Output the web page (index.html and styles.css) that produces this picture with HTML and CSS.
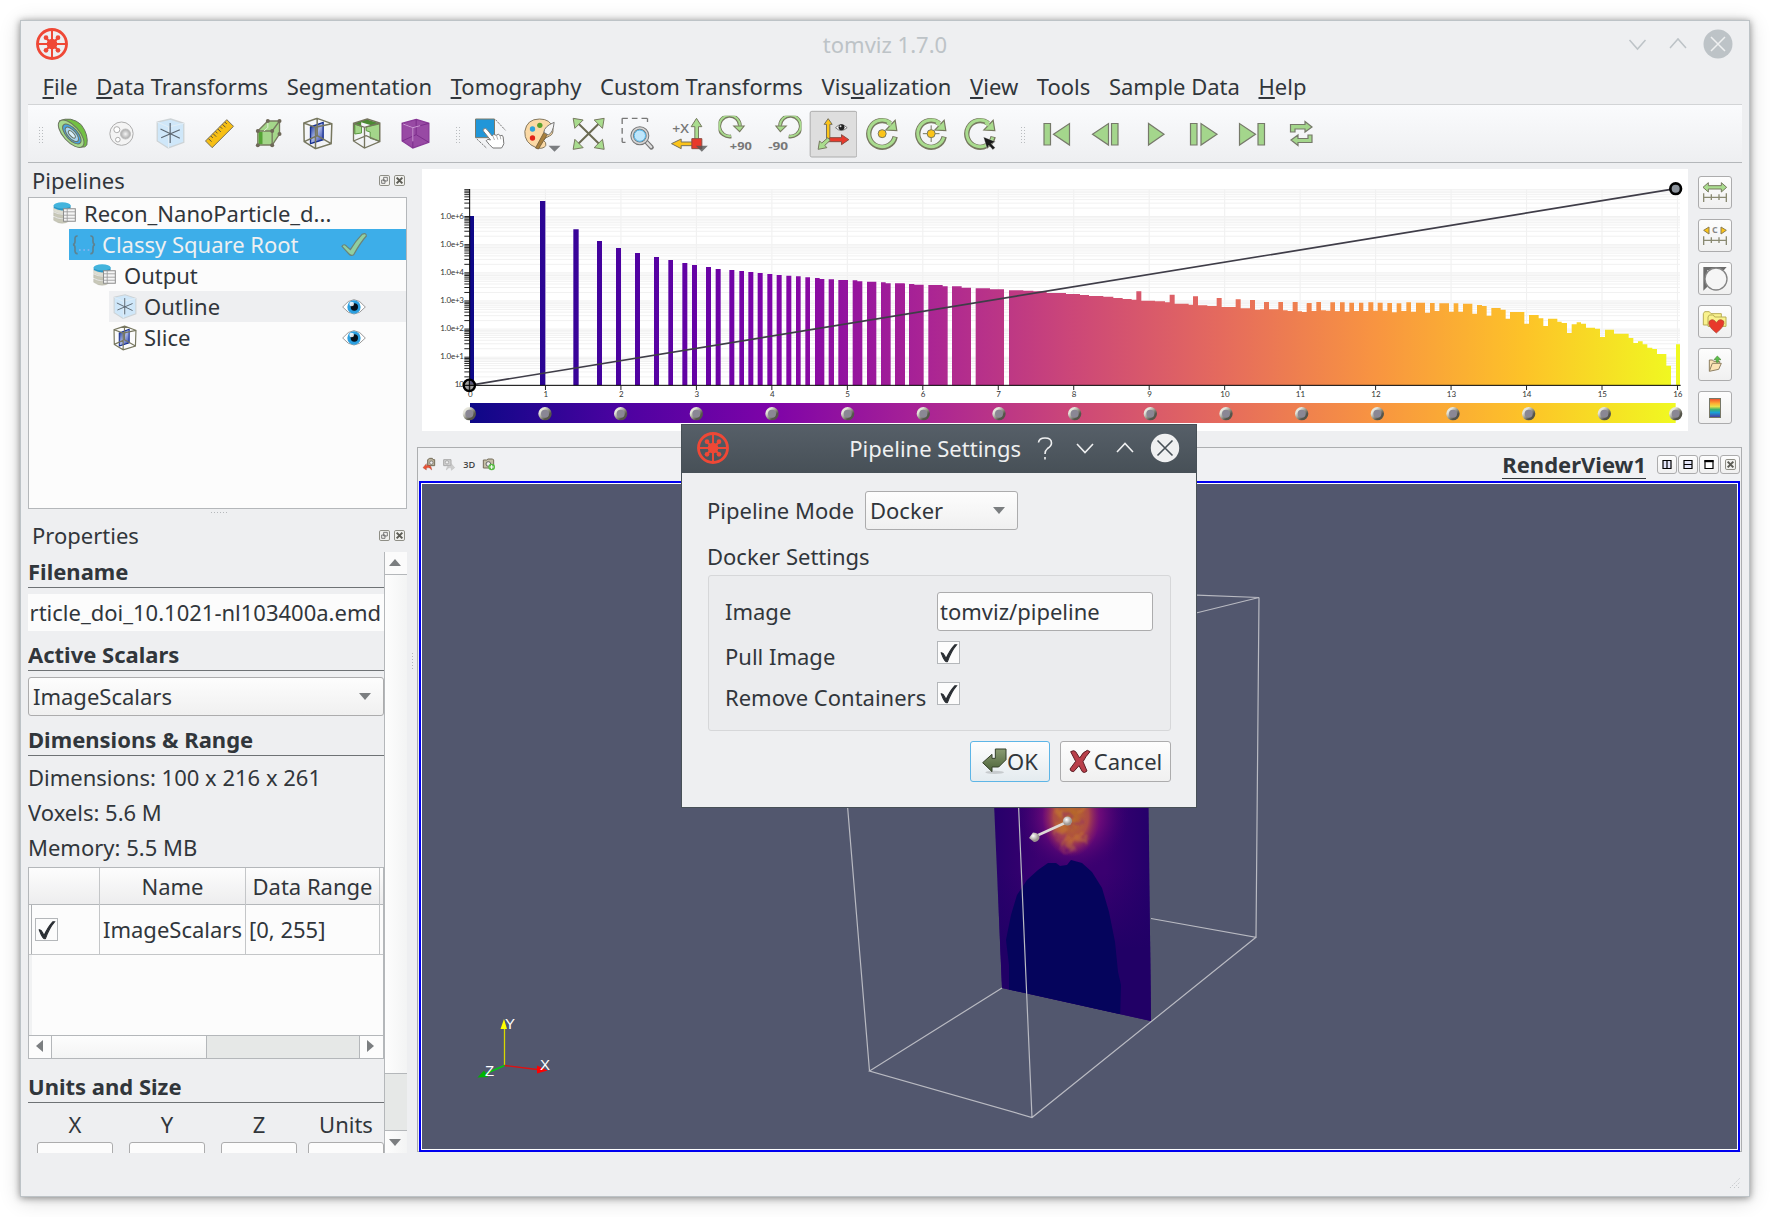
FILE: index.html
```html
<!DOCTYPE html>
<html lang="en">
<head>
<meta charset="utf-8">
<title>tomviz 1.7.0</title>
<link rel="stylesheet" href="styles.css">
</head>
<body>
<svg class="defs" width="0" height="0">
  <defs>
    <linearGradient id="blueFace" x1="0" y1="0" x2="1" y2="1"><stop offset="0" stop-color="#0c2a90"/><stop offset=".5" stop-color="#a9b6e6"/><stop offset="1" stop-color="#1b2f9c"/></linearGradient>
    <radialGradient id="bubble"><stop offset="0" stop-color="#f5f5f5"/><stop offset="1" stop-color="#a8a8a8"/></radialGradient>
    <symbol id="logo" viewBox="-48 -48 96 96">
      <g stroke="#ef4836" fill="none" stroke-linecap="round">
        <circle r="43.5" stroke-width="8.500"/>
        <path d="M0-43V43M-43 0H43" stroke-width="6"/>
        <path d="M-18-18L18 18M-18 18L18-18" stroke-width="7"/>
      </g>
      <g fill="#ef4836"><circle r="16"/><circle cx="-18" cy="-19" r="7"/><circle cx="18" cy="-19" r="7"/><circle cx="-18" cy="19" r="7"/><circle cx="18" cy="19" r="7"/></g>
    </symbol>
    <symbol id="outline" viewBox="470 355 86 92">
      <path d="M513 358L553 371V428L506 445L473 424V367Z" fill="#cfe7f9" stroke="#cdd3d6" stroke-width="4"/>
      <path d="M473 367L507 382L553 371M507 382V445" fill="none" stroke="#e3eef6" stroke-width="3"/>
      <path d="M512 370V430M483 388L541 416M485 414L541 390" stroke="#5c6670" stroke-width="3.500"/>
    </symbol>
    <symbol id="slice" viewBox="909 353 92 97">
      <path d="M933 382L971 368V420L933 432Z" fill="url(#blueFace)" stroke="#162f8f" stroke-width="4"/>
      <path d="M953 356L997 372L995 432L948 447L914 426L913 370ZM913 370L948 383L997 372M948 383V447M953 356V408L914 426M953 408L995 432" fill="none" stroke="#77775f" stroke-width="4.500"/>
    </symbol>
    <symbol id="db" viewBox="0 0 68 68">
      <path d="M2 44q25 14 50 0v10q-25 18-50 0ZM2 31q25 14 50 0v10q-25 14-50 0Z" fill="#c8c8b8" stroke="#a9a99c"/>
      <path d="M2 18q25 14 50 0v10q-25 14-50 0Z" fill="#deded2" stroke="#b4b4a8"/>
      <path d="M2 10v8q25 14 50 0v-8Z" fill="#2a96c4"/><ellipse cx="27" cy="10" rx="25" ry="9" fill="#43b4dd"/>
      <path d="M31 20H66V57H31Z" fill="#f5f5f5" stroke="#8d8d8d" stroke-width="3"/><path d="M31 29H66M31 39H66M31 48H66M42 20V57" stroke="#999" stroke-width="2.500"/>
    </symbol>
    <symbol id="eye" viewBox="0 0 72 48">
      <path d="M2 24Q36-20 70 24Q36 66 2 24Z" fill="#fff" stroke="#999" stroke-width="3"/>
      <circle cx="36" cy="24" r="20" fill="#2b9fe0"/><circle cx="37" cy="24" r="11" fill="#06121c"/><circle cx="29" cy="15" r="7" fill="#fff" opacity=".85"/>
    </symbol>
    <symbol id="tick" viewBox="0 0 66 66">
      <path d="M12 34C19 31 21 42 26 50C32 37 42 20 51 11H56C44 25 36 42 30 59C26 62 20 56 12 34Z" fill="#2a2e33" stroke="#2a2e33" stroke-width="3"/>
    </symbol>
    <symbol id="dock" viewBox="0 0 33 33">
      <rect x="1.500" y="1.500" width="30" height="30" rx="4" fill="#f1f1ee" stroke="#7a7a70" stroke-width="2.500"/>
      <path d="M14 7h11v11h-11zM8 15h10v10h-10z" fill="#f1f1ee" stroke="#666" stroke-width="2.500"/>
    </symbol>
    <symbol id="shut" viewBox="0 0 33 33">
      <rect x="1.500" y="1.500" width="30" height="30" rx="4" fill="#f1f1ee" stroke="#7a7a70" stroke-width="2.500"/>
      <path d="M8 8L25 25M25 8L8 25" stroke="#5c5c55" stroke-width="6"/>
    </symbol>
    <symbol id="spin" viewBox="-50 -50 100 100">
      <path d="M39 9A40 40 0 1 1 24-31" fill="none" stroke="#76795f" stroke-width="16"/>
      <path d="M38 11A40 40 0 1 1 26-31" fill="none" stroke="#a9dc8e" stroke-width="9"/>
      <path d="M39-40L44-9L11-11Z" fill="#a9dc8e" stroke="#76795f" stroke-width="3.500"/>
      <path d="M16-33L26-25" stroke="#a9dc8e" stroke-width="9"/>
    </symbol>
    <symbol id="halfspin" viewBox="0 0 100 100">
      <path d="M37 60A30 30 0 1 1 62 29" fill="none" stroke="#76795f" stroke-width="11"/>
      <path d="M36 59A30 30 0 1 1 62 31" fill="none" stroke="#a9dc8e" stroke-width="5.500"/>
      <path d="M44 30H74L61 46Z" fill="#a9dc8e" stroke="#76795f" stroke-width="3"/>
    </symbol>
  </defs>
</svg>

<div class="window">
  <header class="titlebar">
    <svg class="logo" width="32" height="32"><use href="#logo"/></svg>
    <span class="title">tomviz 1.7.0</span>
    <svg class="wm" width="110" height="32" viewBox="-10 0 110 32" fill="none">
      <path d="M-3.500 12L4.500 21L12.500 12M37 20L45 11L53 20" stroke="#bdc3c7" stroke-width="1.500"/>
      <circle cx="85" cy="16" r="14.500" fill="#bdc3c7"/><path d="M78 9L92 23M92 9L78 23" stroke="#eff0f1" stroke-width="1.500"/>
    </svg>
  </header>
  <nav class="menubar">
    <span><u>F</u>ile</span><span><u>D</u>ata Transforms</span><span>Segmentation</span><span><u>T</u>omography</span><span>Custom Transforms</span><span>Vis<u>u</u>alization</span><span><u>V</u>iew</span><span>Tools</span><span>Sample Data</span><span><u>H</u>elp</span>
  </nav>
  <div class="toolbar">
    <i class="grip"></i>
    <svg viewBox="145.500 313 147 174"><g stroke="#6a735f" stroke-width="3">
      <path d="M179 364Q215 348 245 375Q268 405 262 436Q258 444 246 442Q200 400 179 364Z" fill="#72c043"/>
      <ellipse cx="215" cy="402" rx="51" ry="24" transform="rotate(48 215 402)" fill="#a6d98c"/>
      <ellipse cx="217" cy="403" rx="37" ry="17" transform="rotate(48 217 403)" fill="#4aa3df"/>
      <ellipse cx="217" cy="404" rx="27" ry="12" transform="rotate(48 217 404)" fill="#a9d4f2"/>
      <ellipse cx="217" cy="404" rx="14" ry="6" transform="rotate(48 217 404)" fill="#d9effb"/></g></svg>
    <svg viewBox="292.500 313 147 174"><g stroke="#adadad" stroke-width="3">
      <circle cx="366" cy="402" r="35" fill="#f4f4f4"/><circle cx="352" cy="390" r="9" fill="#fff"/><circle cx="378" cy="403" r="15" fill="url(#bubble)" stroke="#c0c0c0"/><circle cx="355" cy="420" r="7" fill="#fff"/></g></svg>
    <svg viewBox="439.500 313 147 174"><use href="#outline" x="470" y="355" width="86" height="92"/></svg>
    <svg viewBox="586.500 313 147 174"><path d="M618 424L682 360L702 380L638 444Z" fill="#f7bf14" stroke="#77705a" stroke-width="3"/><path d="M627 417l9 9M634 409l6 6M641 402l9 9M648 395l6 6M655 388l9 9M662 381l6 6M669 374l9 9M676 367l6 6" stroke="#5b523b" stroke-width="3"/></svg>
    <svg viewBox="733.500 313 147 174"><path d="M775 394L805 364H840V403L818 436H775Z" fill="#a4d68a" stroke="#76795f" stroke-width="4"/><path d="M775 394H818V436M818 394L840 364" fill="none" stroke="#76795f" stroke-width="4"/><path d="M778 397h11v36h-11z" fill="#55a436"/><path d="M805 364v20l-12 10" fill="none" stroke="#dff0d5" stroke-width="3"/><g fill="#6e6858"><circle cx="775" cy="394" r="6"/><circle cx="805" cy="364" r="6"/><circle cx="840" cy="364" r="6"/><circle cx="840" cy="403" r="6"/><circle cx="818" cy="437" r="6"/><circle cx="775" cy="437" r="6"/><circle cx="818" cy="394" r="6"/></g></svg>
    <svg viewBox="880.500 313 147 174"><use href="#slice" x="909" y="353" width="92" height="97"/></svg>
    <svg viewBox="1027.500 313 147 174"><path d="M1063 371L1100 359L1140 371L1120 378L1085 368V400L1065 402Z" fill="#4c8a34"/><path d="M1066 374l20 6v20l-20 3zM1100 382L1140 373V424L1112 416V397L1100 393Z" fill="#a4d68a" stroke="#5d9a42" stroke-width="3"/><path d="M1103 358L1141 370V426L1095 445L1062 424V371ZM1062 371L1095 383L1141 370M1095 383V445M1062 424L1100 408L1141 426" fill="none" stroke="#76755f" stroke-width="4"/></svg>
    <svg viewBox="1174.500 313 147 174"><path d="M1250 359L1288 371V428L1240 445L1208 424V371Z" fill="#984aa4" stroke="#8a3a98" stroke-width="4"/><path d="M1208 371L1240 384L1288 371M1240 384V445M1250 359V405L1208 424M1250 405L1288 428" fill="none" stroke="#7b2d8b" stroke-width="3"/><path d="M1211 373L1240 384L1262 378M1240 384V425" fill="none" stroke="#cf9ad6" stroke-width="3"/></svg>
    <i class="grip mid"></i>
    <svg viewBox="76.500 43 147 174"><path d="M108 88H165V144H108Z" fill="#2196d8" stroke="#7b7b6b" stroke-width="3"/><path d="M168 90L198 122M112 148L142 176" stroke="#777" stroke-width="3" stroke-dasharray="7 3"/><path d="M131 119Q138 112 144 121L158 139Q162 130 170 137Q177 130 182 138Q190 134 191 142L193 162Q190 170 186 175H160Q148 164 140 153Q144 146 153 151L133 126Q130 122 131 119Z" fill="#fff" stroke="#777" stroke-width="3"/><path d="M160 139l5 12M171 138l4 12M182 139l2 10" stroke="#888" stroke-width="2"/></svg>
    <svg viewBox="223.500 43 147 174"><path d="M300 88Q262 88 256 125Q254 160 290 174Q310 180 319 168Q321 158 312 152Q318 143 330 139Q343 134 340 115Q333 88 300 88Z" fill="#fbd9a5" stroke="#84785f" stroke-width="3"/><circle cx="279" cy="118" r="8" fill="#2ea3dc"/><circle cx="301" cy="107" r="8" fill="#5aa02c"/><circle cx="279" cy="145" r="8" fill="#e32219"/><path d="M288 175L315 125L325 132L297 178Z" fill="#a87f3c" stroke="#705c3a" stroke-width="2.500"/><path d="M313 128Q314 110 344 98Q341 130 326 136Z" fill="#f5f5f5" stroke="#777" stroke-width="3"/><path d="M327 168h36l-18 18z" fill="#7b7d80"/></svg>
    <svg viewBox="370.500 43 147 174"><path d="M412 97L483 167M483 97L412 167" stroke="#6b6a52" stroke-width="6"/><g fill="#a9dc8e" stroke="#76795f" stroke-width="3"><path d="M401 86L431 91L406 116ZM494 86L464 91L489 116ZM401 179L431 174L406 149ZM494 179L464 174L489 149Z"/></g></svg>
    <svg viewBox="517.500 43 147 174"><path d="M548 86H624M548 86V158M624 86V97M548 158H558" fill="none" stroke="#777" stroke-width="4" stroke-dasharray="17 12"/><path d="M621 157L636 173" stroke="#777" stroke-width="14" stroke-linecap="round"/><path d="M622 158L635 172" stroke="#ddd" stroke-width="7" stroke-linecap="round"/><circle cx="601" cy="138" r="23" fill="#d4ecfa" stroke="#777" stroke-width="11"/><circle cx="601" cy="138" r="23" fill="none" stroke="#d6d6d6" stroke-width="5"/><circle cx="601" cy="138" r="17" fill="#bfe6fb" stroke="#4db3e6" stroke-width="3"/></svg>
    <svg viewBox="664.500 43 147 174"><text x="698" y="129" class="axlabel" textLength="50" lengthAdjust="spacingAndGlyphs">+X</text><path d="M766 150V111H755L771 86L787 111H777V150Z" fill="#a9dc8e" stroke="#76795f" stroke-width="3"/><path d="M760 157H725V148L696 162L725 177V168H760Z" fill="#fcc419" stroke="#76705a" stroke-width="3"/><path d="M757 147H787V177H757Z" fill="#e8392b" stroke="#8a4c42" stroke-width="3"/><path d="M769 168h36l-18 18z" fill="#555" opacity=".8"/></svg>
    <svg viewBox="811.500 43 147 174"><use href="#halfspin" x="837" y="78" width="104" height="104"/><text x="871" y="180" class="deg" textLength="66" lengthAdjust="spacingAndGlyphs">+90</text></svg>
    <svg viewBox="958.500 43 147 174"><g transform="translate(1922 0) scale(-1 1)"><use href="#halfspin" x="836" y="78" width="104" height="104"/></g><text x="986" y="180" class="deg" textLength="60" lengthAdjust="spacingAndGlyphs">-90</text></svg>
    <svg viewBox="1105.500 43 147 174"><rect x="1112" y="65" width="140" height="137" rx="5" fill="#dedede" stroke="#acacac" stroke-width="3"/><path d="M1161 147V104H1154L1166 87L1178 104H1171V147Z" fill="#fcc419" stroke="#76705a" stroke-width="3"/><path d="M1171 144H1206V135L1228 150L1206 165V156H1166Z" fill="#e8392b" stroke="#8a4c42" stroke-width="3"/><path d="M1165 144L1172 152L1156 167L1162 174L1136 179L1140 154L1147 160Z" fill="#a9dc8e" stroke="#76795f" stroke-width="3"/><path d="M1188 114Q1205 96 1223 114Q1205 131 1188 114Z" fill="#fff" stroke="#777" stroke-width="3"/><circle cx="1206" cy="113" r="9" fill="#222"/><circle cx="1203" cy="110" r="3" fill="#ddd"/></svg>
    <svg viewBox="-75.500 -89 147 174"><use href="#spin" x="-50" y="-50" width="100" height="100"/><circle r="12" fill="#fcc419" stroke="#76795f" stroke-width="3"/></svg>
    <svg viewBox="-75.500 -89 147 174"><use href="#spin" x="-50" y="-50" width="100" height="100"/><path d="M0-25V25M-25 0H25" stroke="#76795f" stroke-width="3"/><circle r="12" fill="#fcc419" stroke="#76795f" stroke-width="3"/></svg>
    <svg viewBox="-75.500 -89 147 174"><use href="#spin" x="-50" y="-50" width="100" height="100"/><path d="M10 10L46 24L33 30L45 42L38 48L26 35L21 46Z" fill="#1a1a1a" stroke="#f2f3f4" stroke-width="1"/></svg>
    <i class="grip play"></i>
    <svg class="media" viewBox="0 0 49 58"><path d="M12 19.500h6.500v21.500H12zM37.500 19.500V41L21.500 30.200Z"/></svg>
    <svg class="media" viewBox="0 0 49 58"><path d="M30.500 19.500H37V41H30.500zM27.500 19.500V41L11.500 30.200Z"/></svg>
    <svg class="media" viewBox="0 0 49 58"><path d="M18.500 19.500V41L34 30.200Z"/></svg>
    <svg class="media" viewBox="0 0 49 58"><path d="M11.500 19.500H18V41H11.500zM22 19.500V41L38 30.200Z"/></svg>
    <svg class="media" viewBox="0 0 49 58"><path d="M11.500 19.500V41L27.500 30.200ZM30 19.500H36.500V41H30z"/></svg>
    <svg class="media" viewBox="0 0 49 58"><path d="M13.500 28V20.500H28V17.500L35 23L28 28V25H18V28ZM35 31V38.500H21V41.500L14 36L21 31V34.500H31V31Z"/></svg>
  </div>

  <main class="workspace">
    <aside class="dock">
      <div class="docktitle"><span>Pipelines</span><svg width="11" height="11"><use href="#dock"/></svg><svg width="11" height="11"><use href="#shut"/></svg></div>
      <div class="tree">
        <div class="row l0"><svg width="23" height="23"><use href="#db"/></svg><span>Recon_NanoParticle_d...</span></div>
        <div class="row l1 sel"><svg width="24" height="20" viewBox="0 0 72 60" fill="none"><path d="M17 3Q8 2 9 14Q10 28 3 29Q10 30 9 44Q8 57 17 56M55 3Q64 2 63 14Q62 28 69 29Q62 30 63 44Q64 57 55 56" stroke="#5d8391" stroke-width="5"/><path d="M21 45h5M34 45h5M47 45h5" stroke="#8fb4f0" stroke-width="4"/></svg><span>Classy Square Root</span><svg class="mark" width="26" height="23" viewBox="0 0 78 69"><path d="M3 40Q9 30 18 41L28 50Q45 22 63 4Q76-2 76 9Q58 29 38 65Q30 70 24 63Q12 50 3 40Z" fill="#90cfa0" stroke="#6b8378" stroke-width="3.500"/></svg></div>
        <div class="row l2"><svg width="23" height="23"><use href="#db"/></svg><span>Output</span></div>
        <div class="row l3 alt"><svg width="24" height="25"><use href="#outline"/></svg><span>Outline</span><svg class="mark" width="24" height="16"><use href="#eye"/></svg></div>
        <div class="row l3"><svg width="24" height="26"><use href="#slice"/></svg><span>Slice</span><svg class="mark" width="24" height="16"><use href="#eye"/></svg></div>
      </div>
      <div class="split"></div>
      <div class="docktitle props"><span>Properties</span><svg width="11" height="11"><use href="#dock"/></svg><svg width="11" height="11"><use href="#shut"/></svg></div>
      <div class="scroll">
        <div class="form">
          <h2 class="first">Filename</h2>
          <div class="field">rticle_doi_10.1021-nl103400a.emd</div>
          <h2>Active Scalars</h2>
          <div class="combo">ImageScalars</div>
          <h2>Dimensions &amp; Range</h2>
          <div class="facts"><p>Dimensions: 100 x 216 x 261</p><p>Voxels: 5.6 M</p><p>Memory: 5.5 MB</p></div>
          <div class="table">
            <div class="thead"><span></span><span>Name</span><span>Data Range</span><span></span></div>
            <div class="trow"><span><b class="box"><svg width="23" height="23"><use href="#tick"/></svg></b></span><span>ImageScalars</span><span>[0, 255]</span><span></span></div>
            <div class="tfree"></div>
            <div class="hbar"><i class="left"></i><i class="thumb"></i><i class="groove"></i><i class="right"></i></div>
          </div>
          <h2 class="units">Units and Size</h2>
          <div class="axes"><label>X<i></i></label><label>Y<i></i></label><label>Z<i></i></label><label class="u">Units<i></i></label></div>
        </div>
        <div class="vbar"><i class="up"></i><i class="thumb"></i><i class="groove"></i><i class="down"></i></div>
      </div>
    </aside>
    <div class="vsplit"></div>
    <section class="right">
      <div class="charts">
        <svg class="histogram" id="histogram" viewBox="36 27 3798 786" width="1266" height="262"></svg>
        <div class="sidebuttons">
          <button><svg width="26" height="26" viewBox="0 0 78 78"><path d="M3 22L19 8V17H58V8L74 22L58 36V27H19V36Z" fill="#a9dc8e" stroke="#76795f" stroke-width="3"/><path d="M5 52H73M5 40V66M28 43V60M51 43V60M73 40V66" stroke="#8a8a72" stroke-width="4"/></svg></button>
          <button><svg width="26" height="26" viewBox="0 0 78 78"><path d="M5 22L21 12V33ZM73 22L57 12V33Z" fill="#fcc419" stroke="#8a7c50" stroke-width="3"/><text x="30" y="31" class="cletter">C</text><path d="M5 52H73M5 40V66M28 43V60M51 43V60M73 40V66" stroke="#8a8a72" stroke-width="4"/></svg></button>
          <button><svg width="26" height="26" viewBox="0 0 78 78"><path d="M4 3H74L66 12H16V62L4 74Z" fill="#6c6c6c"/><circle cx="42" cy="39" r="33" fill="#f6f6f6" stroke="#858585" stroke-width="4"/></svg></button>
          <button><svg width="26" height="26" viewBox="0 0 78 78"><path d="M4 48V14L8 8H22L27 14H58V48Z" fill="#f9f28e" stroke="#b8ae55" stroke-width="3"/><path d="M18 52V24L22 18H34L38 24H72V52Z" fill="#f9f28e" stroke="#b8ae55" stroke-width="3"/><path d="M43 72Q14 50 22 36Q34 26 43 41Q52 26 65 36Q71 50 43 72Z" fill="#e8392b" stroke="#a8402c" stroke-width="2"/></svg></button>
          <button><svg width="26" height="26" viewBox="0 0 78 78"><path d="M22 57V24H32L35 28H53V34" fill="#fbe3b5" stroke="#8f8062" stroke-width="3"/><path d="M22 58L31 34H58L50 52Z" fill="#fbe3b5" stroke="#8f8062" stroke-width="3"/><path d="M43 31V23H36L46 12L57 23H49V31Z" fill="#5ac04a" stroke="#4d8a3a" stroke-width="2"/></svg></button>
          <button><i class="swatch"></i></button>
        </div>
      </div>
      <div class="view">
        <div class="viewbar">
          <svg width="76" height="16" viewBox="36 888 228 48">
            <path d="M53 896l6-4h8l2 4h5v18H53z" fill="#b9b19a" stroke="#756c58" stroke-width="3"/><circle cx="64" cy="905" r="5" fill="#eee" stroke="#666" stroke-width="2"/><path d="M39 920L49 908V914Q64 908 65 927Q58 916 49 921V927Z" fill="#ea5234" stroke="#9c3a28"/>
            <path d="M101 896h22v18h-22z" fill="#cfcfcf" stroke="#aaa" stroke-width="3"/><circle cx="111" cy="904" r="5" fill="#eee" stroke="#999" stroke-width="2"/><path d="M134 920L124 908V914Q111 910 109 927Q117 916 124 921V928Z" fill="#ccc" stroke="#aaa"/>
            <text x="160" y="920" class="d3" textLength="36" lengthAdjust="spacingAndGlyphs">3D</text>
            <path d="M220 897h10l4-3h14l3 3v24H220z" fill="#c4bfa6" stroke="#756c58" stroke-width="3"/><circle cx="235" cy="909" r="7" fill="#eee" stroke="#666" stroke-width="3"/><circle cx="245" cy="918" r="10" fill="#58bb44"/><path d="M245 912v12M239 918h12" stroke="#fff" stroke-width="3"/>
          </svg>
          <span class="viewname">RenderView1</span>
          <button><svg width="12" height="12" viewBox="0 0 12 12"><path d="M2 1.500h8v8H2zM6 1.500v8" fill="#e4e6fa" stroke="#000" stroke-width="1.200"/></svg></button>
          <button><svg width="12" height="12" viewBox="0 0 12 12"><path d="M2 1.500h8v8H2zM2 5.500h8" fill="#e4e6fa" stroke="#000" stroke-width="1.200"/></svg></button>
          <button><svg width="12" height="12" viewBox="0 0 12 12"><path d="M2 1.500h8v8H2z" fill="#fff" stroke="#000" stroke-width="1.200"/><path d="M1.500 2.200h9" stroke="#000" stroke-width="2"/></svg></button>
          <button><svg width="11" height="11"><use href="#shut"/></svg></button>
        </div>
        <svg class="scene" viewBox="422 484 1315 665" width="1315" height="665">
          <defs>
            <linearGradient id="plane"><stop offset="0" stop-color="#25006a"/><stop offset=".3" stop-color="#3a0070"/><stop offset=".7" stop-color="#3a0070"/><stop offset="1" stop-color="#22006a"/></linearGradient>
            <radialGradient id="halo"><stop offset="0" stop-color="#8c1a78"/><stop offset=".5" stop-color="#6a0a78"/><stop offset="1" stop-color="#3a0070" stop-opacity="0"/></radialGradient>
            <radialGradient id="hot"><stop offset="0" stop-color="#b97024"/><stop offset=".6" stop-color="#ac4a46"/><stop offset="1" stop-color="#8c2060" stop-opacity="0"/></radialGradient>
            <radialGradient id="ball" cx=".4" cy=".35"><stop offset="0" stop-color="#fff"/><stop offset="1" stop-color="#9d9690"/></radialGradient>
            <linearGradient id="low" x1="0" y1="0" x2="0" y2="1"><stop offset=".3" stop-color="#210066" stop-opacity="0"/><stop offset=".65" stop-color="#210066"/></linearGradient>
            <filter id="mottle"><feTurbulence type="fractalNoise" baseFrequency=".13" numOctaves="2" seed="4"/><feDisplacementMap in="SourceGraphic" scale="14"/><feGaussianBlur stdDeviation=".9"/></filter>
            <clipPath id="cut"><path d="M993 780L1148.300 780L1151 1021L1002 988Z"/></clipPath>
          </defs>
          <rect x="422" y="484" width="1316" height="666" fill="#52576e"/>
          <g clip-path="url(#cut)">
            <rect x="990" y="780" width="165" height="245" fill="url(#plane)"/>
            <ellipse cx="1073" cy="815" rx="56" ry="60" fill="url(#halo)"/>
            <ellipse cx="1071" cy="816" rx="29" ry="41" fill="url(#hot)"/>
            <g filter="url(#mottle)">
              <path d="M1054 835l12-8M1060 844l18-10M1058 826l14-8M1068 848l14-16M1056 812l10 3M1076 812l10-7M1078 842l12-4" stroke="#d08a28" stroke-width="4" opacity=".4"/>
              <path d="M1056 838l10-3M1070 827l14-6M1064 820l8-6M1062 852l12-4" stroke="#9a3560" stroke-width="4" opacity=".6"/>
            </g>
            <rect x="990" y="808" width="165" height="217" fill="url(#low)"/>
            <path d="M1009 994V965L1006 940L1011 915L1017 895L1027 880L1038 870L1048 863H1056L1060 866L1067 865L1071 860L1082 863L1092 872L1102 888L1109 912L1115 942L1118 972L1121 985L1120 1020Z" fill="#05045c"/>
          </g>
          <g stroke="#b9bac2" stroke-width="1.200" fill="none">
            <path d="M1190 594.800L1259 597.500L1190 614.500M1259 597.500L1256 937.300L1151 918.500M1256 937.300L1032 1117.500L869.500 1071L1002 988M847 800L869.500 1071M1018.300 800L1032 1117.500"/>
          </g>
          <path d="M1034 837L1067 822" stroke="#dedad6" stroke-width="2.500"/><circle cx="1067.500" cy="821" r="4.600" fill="url(#ball)"/><path d="M1029 838L1033 832.500Q1040 833 1039.500 838Q1038 842 1034 842Z" fill="url(#ball)"/>
          <path d="M504.500 1065V1027" stroke="#d8d800" stroke-width="1.300"/><path d="M500.500 1029L504 1019L507 1029Z" fill="#ffff00"/>
          <path d="M504.500 1065.500L537 1069.500" stroke="#e01010" stroke-width="1.300"/><path d="M537 1065.500L547.500 1070.500L537 1073.500Z" fill="#f00"/>
          <path d="M504.500 1065.500L486 1073.500" stroke="#00c810" stroke-width="1.500"/><path d="M477.500 1077.500L484 1070.500L488 1077Z" fill="#00b400"/>
          <g class="triad"><text x="505" y="1029">Y</text><text x="540" y="1070">X</text><text x="485" y="1075.500">Z</text></g>
        </svg>
      </div>
    </section>
  </main>
  <footer class="status"><svg width="12" height="12" viewBox="0 0 12 12"><path d="M1 11L11 1M5 11L11 5M9 11L11 9" stroke="#c3c6c9" stroke-dasharray="1.500 1.500"/></svg></footer>
</div>

<div class="dialog">
  <header>
    <svg width="32" height="32"><use href="#logo"/></svg>
    <span>Pipeline Settings</span>
    <svg width="154" height="32" viewBox="0 0 154 32" fill="none" stroke="#eff0f1" stroke-width="1.600">
      <path d="M12.500 10.500Q13 6 19 6Q25.500 6 25.500 11Q25.500 14 21.500 16.500Q19 18.500 19 22M19 25V27.500"/>
      <path d="M51 12L59 20.500L67 12M91 20L99 11.500L107 20"/>
      <circle cx="139" cy="16" r="14.200" fill="#eff0f1" stroke="none"/><path d="M131.500 8.500L146.500 23.500M146.500 8.500L131.500 23.500" stroke="#475057"/>
    </svg>
  </header>
  <div class="mode"><span>Pipeline Mode</span><div class="combo">Docker</div></div>
  <div class="grouptitle">Docker Settings</div>
  <div class="group">
    <span class="g1">Image</span><div class="input">tomviz/pipeline</div>
    <span class="g2">Pull Image</span><b class="box"><svg width="23" height="23"><use href="#tick"/></svg></b>
    <span class="g3">Remove Containers</span><b class="box"><svg width="23" height="23"><use href="#tick"/></svg></b>
  </div>
  <div class="actions">
    <button class="ok"><svg width="25" height="27" viewBox="0 0 75 81"><defs><linearGradient id="og" x1="0" y1="0" x2="0" y2="1"><stop offset="0" stop-color="#8a9c72"/><stop offset="1" stop-color="#4b6238"/></linearGradient></defs><ellipse cx="38" cy="73" rx="28" ry="5" fill="#000" opacity=".15"/><path d="M40 3H72V35L50 57H30V71L2 44L30 19V31H40Z" fill="url(#og)" stroke="#34402a" stroke-width="3"/></svg><span>OK</span></button>
    <button class="cancel"><svg width="22" height="25" viewBox="0 0 66 75"><path d="M5 8Q15 2 20 8L32 27Q42 8 55 4L63 8Q50 22 42 38L54 66Q46 74 40 68L30 50L14 68Q4 68 3 60L20 37Z" fill="#b93f4a" stroke="#5c1f26" stroke-width="3"/></svg><span>Cancel</span></button>
  </div>
</div>
<script src="chart.js"></script>
</body>
</html>
```
FILE: styles.css
```css
* { box-sizing: border-box; }
body { margin: 0; background: #fff; width: 1770px; height: 1217px; overflow: hidden; position: relative; font: 22px/30px "Noto Sans", sans-serif; color: #31363b; }
svg { display: block; flex: none; }
.defs { position: absolute; }
i, b { font-style: normal; font-weight: normal; display: block; }
p { margin: 0; }
button { font: inherit; color: inherit; margin: 0; padding: 0; border: 1px solid #acacad; border-radius: 3px; background: linear-gradient(#fdfdfd, #f0f0f0); display: flex; align-items: center; justify-content: center; }
u { text-decoration-thickness: 2px; text-underline-offset: 2px; text-decoration-skip-ink: none; }

.window { position: absolute; left: 20px; top: 20px; width: 1730px; height: 1177px; border: 1px solid #bdc3c7; background: #eeeff1; box-shadow: 0 1px 7px rgba(0,0,0,.42), 0 3px 20px rgba(0,0,0,.16); display: flex; flex-direction: column; }
.titlebar { height: 49px; display: flex; align-items: center; justify-content: space-between; padding: 0 16px 3px 15px; }
.titlebar .title { color: #bdc3c7; padding-left: 79px; padding-bottom: 1px; }
.menubar { height: 34px; display: flex; padding-left: 21.500px; gap: 18.600px; line-height: 33px; white-space: nowrap; }
.toolbar { height: 59px; margin: 0 7px; border-top: 1px solid #d2d4d6; border-bottom: 1px solid #b4b7ba; background: linear-gradient(#fafbfd, #eeeff1); display: flex; }
.toolbar svg { width: 49px; height: 58px; margin-top: -1px; }
.grip { width: 5px; height: 17px; margin: 21px 5px 0 10px; background: radial-gradient(circle, #b9bcbf 0.6px, transparent 0.9px) 0 0 / 3px 3px; }
.grip.mid { margin: 21px 5px 0 15px; }
.grip.play { margin: 21px 6.500px 0 16px; }
.media { fill: #a4d68c; stroke: #76796a; stroke-width: 1.200; }
.axlabel { font: 600 38px "Open Sans", sans-serif; fill: #777; }
.deg { font: 700 34px "Open Sans", sans-serif; fill: #777; }
.cletter { font: 700 27px "Open Sans", sans-serif; fill: #888; }

.workspace { height: 990px; margin: 0 7px; display: flex; }
.dock { width: 380px; display: flex; flex-direction: column; }
.docktitle { height: 34px; padding: 1px 3px 0 4px; display: flex; align-items: center; gap: 4px; }
.docktitle span { flex: 1; padding-bottom: 2px; }
.docktitle.props { height: 34px; padding: 0 3px 1px 4px; }
.docktitle.props span { padding-bottom: 1px; }
.tree { width: 379px; height: 312px; border: 1px solid #b4b7ba; background: #fcfcfc; }
.row { height: 31px; line-height: 31px; display: flex; align-items: center; background: #fcfcfc; white-space: nowrap; }
.row span { flex: 1; margin-left: 8px; }
.row.l0 { margin-left: 20px; padding-left: 4px; }
.row.l1 { margin-left: 40px; padding-left: 3px; }
.row.l1 span { margin-left: 6px; }
.row.l2 { margin-left: 60px; padding-left: 4px; }
.row.l2 span { margin-left: 8px; }
.row.l3 { margin-left: 80px; padding-left: 4px; }
.row.l3 span { margin-left: 7px; }
.row.alt { background: #eeeff1; }
.row.sel { background: #3daee9; color: #eff0f1; }
.mark { margin-right: 39px; }
.row.l3 .mark { margin-right: 40px; }
.split { width: 17px; height: 10px; margin-left: 182px; background: radial-gradient(circle, #b5b8bb 0.6px, transparent 0.9px) 0 2px / 3px 3px; clip-path: inset(3px 0 4px 0); }
.scroll { height: 601px; width: 379px; display: flex; overflow: hidden; margin-top: -1px; }
.form { width: 356px; height: 601px; overflow: hidden; padding-top: 1px; }
h2 { margin: 0; font-size: 22px; line-height: 31px; height: 40px; padding-top: 8px; border-bottom: 1px solid #6e7275; }
h2.first { height: 35px; padding-top: 3px; }
h2.units { height: 44px; padding-top: 12px; margin-bottom: 4px; }
.field { margin: 6px 0 0; height: 37px; line-height: 37px; background: #fcfcfc; text-align: right; padding-right: 3px; white-space: nowrap; }
.combo { margin-top: 6px; height: 39px; line-height: 37px; border: 1px solid #acacad; border-radius: 3px; background: linear-gradient(#fdfdfd, #f0f0f0); padding: 0 12px 0 4px; display: flex; justify-content: space-between; align-items: center; }
.combo::after { content: ""; border: 6.500px solid transparent; border-top: 7px solid #7b7e80; border-bottom: 0; }
.facts { padding: 4px 0 2px; }
.facts p { height: 35px; line-height: 35px; }
.form h2 + .facts { height: 111px; }
.table { height: 192px; border: 1px solid #b4b7ba; background: #fcfcfc; }
.thead, .trow { display: grid; grid-template-columns: 71px 146px 134px 1fr; }
.thead { height: 37px; line-height: 37px; background: linear-gradient(#fdfdfd, #ededee); border-bottom: 1px solid #b4b7ba; text-align: center; white-space: nowrap; }
.thead span, .trow span { border-right: 1px solid #c4c6c8; }
.trow { height: 50px; line-height: 48px; border-bottom: 1px solid #c4c6c8; white-space: nowrap; }
.trow span { padding-left: 3px; }
.trow span:first-child { margin-left: 2px; border-left: 1px solid #acafb2; padding: 13px 0 0 3px; }
.thead span:last-child, .trow span:last-child { border: 0; }
.tfree { height: 80px; border-left: 3px solid #f1f2f3; }
.hbar { height: 23px; border-top: 1px solid #b4b7ba; display: flex; background: #fcfcfc; }
.hbar .left, .hbar .right { width: 23px; border-right: 1px solid #b4b7ba; padding: 4px 0 0 7px; }
.hbar .left::after { content: ""; display: block; width: 0; border: 6.500px solid transparent; border-right: 7px solid #7b7e80; border-left: 0; }
.hbar .right { border: 0; }
.hbar .right::after { content: ""; display: block; width: 0; border: 6.500px solid transparent; border-left: 7px solid #7b7e80; border-right: 0; }
.hbar .thumb { width: 155px; border-right: 1px solid #b4b7ba; background: linear-gradient(#fdfdfd, #f3f4f4); }
.hbar .groove { flex: 1; background: #e6e8e7; border-right: 1px solid #b4b7ba; }
.axes { display: flex; padding-left: 9px; gap: 16px; }
.axes label { width: 76px; height: 50px; line-height: 35px; text-align: center; }
.axes label.u { margin-left: -5px; }
.axes i { height: 38px; border: 1px solid #acacad; border-radius: 3px; background: #fcfcfc; }
.vbar { width: 23px; border-left: 1px solid #b4b7ba; display: flex; flex-direction: column; background: linear-gradient(90deg, #fdfdfd, #f3f4f4); }
.vbar .up { height: 23px; border-bottom: 1px solid #b4b7ba; padding: 7px 0 0 4px; background: #fbfbfb; }
.vbar .up::after { content: ""; display: block; width: 0; border: 6.500px solid transparent; border-bottom: 7px solid #7b7e80; border-top: 0; }
.vbar .thumb { height: 498px; }
.vbar .groove { height: 58px; background: #e6e8e7; border-top: 1px solid #b4b7ba; border-bottom: 1px solid #b4b7ba; }
.vbar .down { padding: 8px 0 0 4px; }
.vbar .down::after { content: ""; display: block; width: 0; border: 6.500px solid transparent; border-top: 7px solid #7b7e80; border-bottom: 0; }
.box { width: 23px; height: 23px; border: 1px solid #b4b7ba; background: #fcfcfc; }
.box svg { margin: -1px; }

.vsplit { width: 9px; height: 17px; margin-top: 489px; background: radial-gradient(circle, #b5b8bb 0.6px, transparent 0.9px) 0 0 / 3px 3px; clip-path: inset(0 4px 0 3px); }
.right { width: 1325px; padding-top: 6px; }
.charts { display: flex; padding-left: 5px; height: 262px; }
.histogram { background: #fff; }
.histogram text { font: 24px "Lato", sans-serif; fill: #333; }
.sidebuttons { padding: 7px 0 0 10px; display: flex; flex-direction: column; gap: 10px; }
.sidebuttons button { width: 34px; height: 33px; }
.swatch { width: 12px; height: 20px; border: 1px solid #776; background: linear-gradient(#f0532d, #fdae33 25%, #e6e04a 42%, #3fb36c 58%, #19a0d8 75%, #4a3fa0); }

.view { margin-top: 16px; height: 705px; border: 1px solid #acaeb0; }
.viewbar { height: 33px; display: flex; align-items: center; padding: 0 1px 0 4px; background: #f0f1f3; gap: 1px; }
.viewbar .viewname { margin-left: auto; margin-right: 10px; margin-top: 1px; font-weight: 700; line-height: 25px; height: 27px; border-bottom: 1px solid #31363b; }
.viewbar button { width: 20px; height: 19px; }
.d3 { font: 600 29px "Open Sans", sans-serif; fill: #444; }
.scene { box-sizing: content-box; border: 1px solid #fff; outline: 2px solid #0000f0; margin: 2px 0 0 3px; }
.triad text { font: 15px "Liberation Sans", sans-serif; fill: #fff; }
.status { display: flex; justify-content: flex-end; padding: 24px 8px 0; }

.dialog { position: absolute; left: 681px; top: 424px; width: 516px; height: 384px; border: 1px solid #475057; background: #eeeff1; }
.dialog header { height: 48px; background: linear-gradient(#565f68, #475057); color: #eff0f1; display: flex; align-items: center; padding: 0 16px 2px 15px; }
.dialog header span { flex: 1; text-align: right; margin: 0; white-space: nowrap; padding: 0 5px 0 0; }
.mode { display: flex; align-items: center; justify-content: flex-start; padding: 18px 0 0 25px; gap: 11px; white-space: nowrap; }
.mode span { width: 147px; padding-bottom: 2px; }
.dialog .combo { margin: 0; width: 153px; }
.grouptitle { padding: 10px 0 0 25px; height: 45px; line-height: 32px; }
.group { margin: 0 25px 0 26px; height: 156px; border: 1px solid #d6d7d9; border-radius: 3px; background: #ebecee; display: grid; grid-template-columns: 212px 1fr; grid-template-rows: 39px 41px 41px; align-items: start; padding: 16px 17px 0 16px; white-space: nowrap; }
.group span { line-height: 39px; }
.group .g2 { padding-top: 6px; }
.group .g3 { padding-top: 6px; }
.group .input { height: 39px; line-height: 37px; border: 1px solid #acacad; border-radius: 3px; background: #fcfcfc; padding-left: 2px; }
.group .box { margin-top: 10px; }
.actions { display: flex; justify-content: flex-end; gap: 10px; padding: 10px 25px 0 0; }
.actions button { height: 41px; }
.actions span { padding-bottom: 2px; }
.ok { width: 80px; border-color: #5db5e6; background: linear-gradient(#fdfdfd, #e4ebef); }
.cancel { width: 111px; gap: 3px; }
```
FILE: chart.js
```js
// Histogram of the active scalars, drawn in thirds of a pixel.
const svg = document.getElementById('histogram');
const BASE = 676, LEFT = 179, RIGHT = 3810, DECADE = 84.4;
const tickX = n => 180 + 226.4 * n;
const out = [];
const plasma = ['#0d0887', '#4c02a1', '#7e03a8', '#a92395', '#cc4778', '#e56b5d', '#f89441', '#fdc328', '#f0f921'];
out.push('<defs><linearGradient id="plasma" gradientUnits="userSpaceOnUse" x1="180" y1="0" x2="3797" y2="0">' +
  plasma.map((c, i) => `<stop offset="${i / 8}" stop-color="${c}"/>`).join('') + '</linearGradient>' +
  '<linearGradient id="bevel" x1="0" y1="0" x2="1" y2="1"><stop offset=".2" stop-color="#e6e6dc"/><stop offset=".75" stop-color="#55554a"/></linearGradient></defs>');

// grid and axis ticks
for (let d = 0; d < 7; d++) {
  for (let m = 1; m <= 9; m++) {
    const y = BASE - DECADE * (d + Math.log10(m));
    out.push(`<path d="M${LEFT} ${y}H${RIGHT}" stroke="#f1f1f1" stroke-width="3"/>`);
    out.push(`<path d="M163 ${y}H${LEFT}" stroke="#222" stroke-width="3"/>`);
  }
}
for (let n = 1; n <= 16; n++) out.push(`<path d="M${tickX(n)} 87V${BASE}" stroke="#f1f1f1" stroke-width="3.5"/>`);

// bars as [x0, x1, top]
const bars = [[180,192,168],[390,406,123],[490,506,208],[561,576,243],[618,633,264],[675,690,279],[732,747,291],[775,789,300],[817,832,309],[846,861,315],[888,903,321],[917,932,327],[958,973,330],[988,1002,333],[1015,1030,336],[1043,1058,339],[1072,1087,342],[1100,1115,345],[1129,1144,347],[1158,1172,349],[1186,1200,352],[1215,1229,354],[1229,1243,357],[1256,1272,358],[1285,1314,360],[1328,1342,361],[1342,1357,364],[1371,1399,365],[1413,1427,367],[1427,1442,370],[1455,1484,370],[1497,1512,372]];
const mid = [[0,15,371],[27,43,372],[43,71,374],[85,128,375],[128,143,379],[156,185,379],[185,213,383],[227,270,385],[270,312,388]];
mid.forEach(([a, b, t]) => bars.push([a + 1470, b + 1470, t]));
const steps = (list, offset, end) => list.forEach(([x, t], i) => bars.push([x + offset, (i + 1 < list.length ? list[i + 1][0] : end) + offset, t]));
steps([[327,391],[370,392],[400,394],[440,399],[498,402],[540,405],[567,408],[610,410],[640,414],[668,417],[695,419],[709,394],[724,422],[765,424],[795,427],[809,404],[824,431],[866,434],[879,409],[894,436],[922,438],[950,414],[965,441],[1007,418],[1022,445],[1050,420],[1065,449],[1080,448],[1092,426],[1107,448],[1135,426],[1149,451],[1163,453],[1178,426],[1193,454],[1206,456],[1221,429],[1235,454],[1249,426],[1263,451]], 1470, 1278);
steps([[5,453],[19,427],[33,452],[61,427],[75,453],[90,427],[104,455],[118,428],[132,453],[147,428],[160,453],[175,427],[190,452],[203,428],[218,452],[232,429],[246,457],[260,430],[274,453],[289,427],[303,455],[318,428],[345,458],[360,429],[374,453],[388,430],[417,455],[431,430],[445,455],[459,431],[487,461],[501,435],[516,438],[530,467],[544,444],[572,449],[587,476],[600,456],[643,491],[657,465],[686,475],[700,498],[714,476],[742,485],[755,489],[771,519],[785,493],[800,487],[813,491],[828,503],[855,506],[870,531],[885,509],[912,521],[956,534],[970,549],[984,544],[998,553],[1012,563],[1027,567],[1041,582],[1069,617]], 2700, 1083);
bars.push([2748 - 58, 2705, 430], [3798, 3810, 553]);
out.push('<path fill="url(#plasma)" d="' + bars.map(([a, b, t]) => `M${a} ${t}H${b}V${BASE}H${a}Z`).join('') + '"/>');

// axes and labels
out.push(`<path d="M${LEFT} 87V${BASE}H3812" fill="none" stroke="#000" stroke-width="3"/>`);
for (let n = 0; n <= 16; n++) {
  out.push(`<path d="M${tickX(n)} ${BASE}V690" stroke="#222" stroke-width="3"/>`);
  out.push(`<text x="${tickX(n) + 1}" y="710" text-anchor="middle">${n}</text>`);
}
for (let d = 1; d <= 6; d++) out.push(`<text x="91" y="${680 - 84 * d}" textLength="71">1.0e+${d}</text>`);
out.push('<text x="134" y="681" textLength="28">1.0</text>');

// opacity function
out.push('<path d="M178 676L3797 86" stroke="#3f3d48" stroke-width="5"/>');
out.push('<circle cx="178" cy="676" r="17" fill="#777" fill-opacity=".7" stroke="#000" stroke-width="7"/><path d="M178 660V692M162 676H194" stroke="#000" stroke-width="3"/>');
out.push('<circle cx="3797" cy="86" r="16" fill="#8b929b" stroke="#000" stroke-width="8"/>');

// colour map with its control points
out.push('<rect x="180" y="729" width="3617" height="60" fill="url(#plasma)"/>');
for (let n = 0; n <= 16; n++) {
  const x = n === 16 ? 3797 : 178 + 227 * n;
  out.push(`<circle cx="${x}" cy="761" r="16" fill="#8a8794" stroke="url(#bevel)" stroke-width="8"/>`);
}
svg.innerHTML = out.join('');
```
